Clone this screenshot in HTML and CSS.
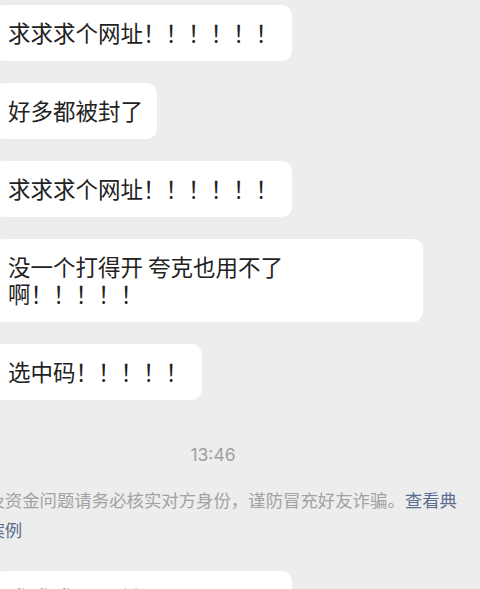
FILE: index.html
```html
<!DOCTYPE html>
<html lang="zh-CN">
<head>
<meta charset="utf-8">
<title>聊天</title>
<link rel="stylesheet" href="styles.css">
</head>
<body>
<div class="chat">
  <div class="bubble">求求求个网址！！！！！！</div>
  <div class="bubble">好多都被封了</div>
  <div class="bubble">求求求个网址！！！！！！</div>
  <div class="bubble">没一个打得开 夸克也用不了啊！！！！！</div>
  <div class="bubble">选中码！！！！！</div>
  <div class="time">13:46</div>
  <div class="notice">涉及资金问题请务必核实对方身份，谨防冒充好友诈骗。<span class="link">查看典型案例</span></div>
  <div class="bubble">求求求个网址！！！！！！</div>
</div>
</body>
</html>
```
FILE: styles.css
```css
html, body {
  margin: 0;
  padding: 0;
  background: #ededed;
  overflow: hidden;
  height: 589px;
}
.chat {
  display: flex;
  flex-direction: column;
  align-items: flex-start;
  margin-left: -6px;
  padding-top: 5px;
  font-family: "Noto Sans CJK SC", "Noto Sans", sans-serif;
}
.bubble {
  box-sizing: border-box;
  max-width: 429px;
  background: #ffffff;
  border-radius: 10px;
  padding: 14px 14px 15px;
  font-size: 22.5px;
  line-height: 27px;
  color: #222222;
  margin-bottom: 22px;
}
.time {
  align-self: stretch;
  width: 438px;
  text-align: center;
  margin-top: 21px;
  font-family: "Inter", "Liberation Sans", sans-serif;
  font-size: 17.5px;
  line-height: 24px;
  color: #a0a0a0;
}
.notice {
  box-sizing: border-box;
  width: 496px;
  margin-left: -24px;
  margin-top: 18px;
  margin-bottom: 26px;
  font-size: 17.4px;
  line-height: 30px;
  color: #a2a2a2;
}
.link {
  color: #5b6e90;
}
```
